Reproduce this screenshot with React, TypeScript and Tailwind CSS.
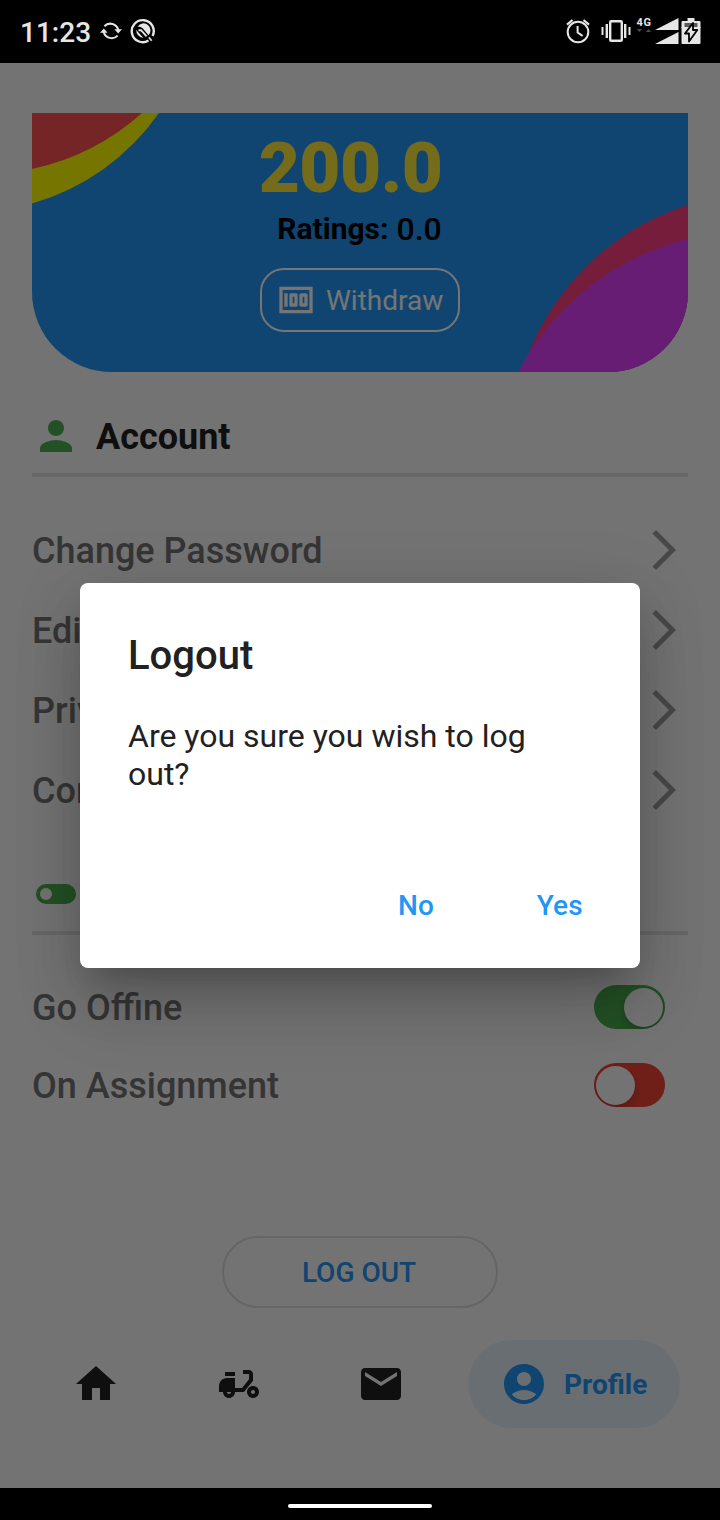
import React from "react";

type IconProps = { d: string; className: string };

function Glyph({ d, className }: IconProps) {
  return (
    <svg viewBox="0 0 24 24" fill="currentColor" fillRule="evenodd" className={className}>
      <path d={d} />
    </svg>
  );
}

const icons = {
  money:
    "M5 8h2v8H5zM12 8H9c-.55 0-1 .45-1 1v6c0 .55.45 1 1 1h3c.55 0 1-.45 1-1V9c0-.55-.45-1-1-1zm-1 6h-1v-4h1v4zM18 8h-3c-.55 0-1 .45-1 1v6c0 .55.45 1 1 1h3c.55 0 1-.45 1-1V9c0-.55-.45-1-1-1zm-1 6h-1v-4h1v4zM2 4v16h20V4H2zm2 14V6h16v12H4z",
  person:
    "M12 12c2.21 0 4-1.79 4-4s-1.79-4-4-4-4 1.79-4 4 1.79 4 4 4zm0 2c-2.67 0-8 1.34-8 4v2h16v-2c0-2.66-5.33-4-8-4z",
  toggle: "M7 7h10a5 5 0 0 1 0 10H7A5 5 0 0 1 7 7zM7 9a3 3 0 1 0 0 6a3 3 0 1 0 0-6z",
  chevron: "M6.23 20.23 8 22 18 12 8 2 6.23 3.77 14.46 12z",
  home: "M10 20v-6h4v6h5v-8h3L12 3 2 12h3v8z",
  scooter:
    "M19 7c0-1.1-.9-2-2-2h-3v2h3v2.65L13.52 14H10V9H6c-2.21 0-4 1.79-4 4v3h2c0 1.66 1.34 3 3 3s3-1.34 3-3h4.48L19 10.35V7zM7 17c-.55 0-1-.45-1-1h2c0 .55-.45 1-1 1zM5 6h5v2H5zM19 13c-1.66 0-3 1.34-3 3s1.34 3 3 3 3-1.34 3-3-1.34-3-3-3zm0 4c-.55 0-1-.45-1-1s.45-1 1-1 1 .45 1 1-.45 1-1 1z",
  mail: "M20 4H4c-1.1 0-1.99.9-1.99 2L2 18c0 1.1.9 2 2 2h16c1.1 0 2-.9 2-2V6c0-1.1-.9-2-2-2zm0 4-8 5-8-5V6l8 5 8-5v2z",
  account:
    "M12 2C6.48 2 2 6.48 2 12s4.48 10 10 10 10-4.48 10-10S17.52 2 12 2zm0 4c1.93 0 3.5 1.57 3.5 3.5S13.93 13 12 13s-3.5-1.57-3.5-3.5S10.07 6 12 6zm0 14c-2.03 0-4.43-.82-6.14-2.88C7.55 15.8 9.68 15 12 15s4.45.8 6.14 2.12C16.43 19.18 14.03 20 12 20z",
};

function StatusBar() {
  return (
    <header className="flex h-[63px] shrink-0 items-center bg-black pl-5 pr-[19px] text-[#e6e6e6]">
      <span className="w-[79px] pt-[2px] text-[28px] font-medium leading-none">11:23</span>
      <svg viewBox="0 0 24 18" className="-mt-[2px] h-[18px] w-6" fill="none" stroke="currentColor" strokeWidth="2">
        <path d="M5.4 4.2A8.2 8.2 0 0 1 19.3 8M18.6 13.6A8.2 8.2 0 0 1 4.7 10" />
        <path d="M15.4 7.200h7.600l-3.800 4.200zM1 10.800h7.600L4.800 6.600z" fill="currentColor" stroke="none" />
      </svg>
      <svg viewBox="0 0 26 26" className="-mt-[2px] ml-[7px] h-[26px] w-[26px]" fill="none" stroke="currentColor">
        <path d="M18.500 22.500A11 11 0 1 1 22.600 18" strokeWidth="2.400" />
        <path d="M7.700 8.500A7 7 0 1 1 18.500 17.300L12.600 10.200Q11 8.800 7.700 8.500Z" fill="currentColor" stroke="none" />
        <path d="M6.200 11.800Q6.200 18.500 13.500 20L7.500 13.500Z" fill="currentColor" stroke="none" />
        <path d="M8.500 12.200H11L16.600 18.400" strokeWidth="2" />
        <path d="M18.800 19.400L21.800 22.800" strokeWidth="1.600" />
      </svg>
      <div className="flex-1" />
      <svg viewBox="0 0 24 26" className="-mt-px h-[26px] w-6" fill="none" stroke="currentColor" strokeWidth="2">
        <circle cx="12" cy="14" r="10.300" />
        <path d="M11.600 8v6.500l5 3.300" />
        <path d="M1 6.600l5.500-4.600M23 6.600l-5.500-4.600" strokeWidth="2.200" />
      </svg>
      <svg viewBox="0 0 30 22" className="-mt-[2px] ml-[11px] h-[22px] w-[30px]" fill="none" stroke="currentColor">
        <rect x="9.200" y="1.200" width="11.600" height="19.600" rx="1" strokeWidth="2.400" />
        <path d="M5.800 4v14M24.200 4v14" strokeWidth="2.400" />
        <path d="M1.500 7v8M28.500 7v8" strokeWidth="2" />
      </svg>
      <div className="ml-1 flex w-[18px] flex-col items-center pb-[15px]">
        <span className="text-[11px] font-bold leading-[12px] tracking-[0.500px]">4G</span>
        <svg viewBox="0 0 16 3" className="h-[3px] w-4 fill-[#4d4d4d]">
          <path d="M1 0h5L3.500 3zM10 3h5L12.500 0z" />
        </svg>
      </div>
      <svg viewBox="0 0 24 26" className="-mt-px ml-[2px] h-[26px] w-6" fill="currentColor">
        <path d="M0 12L23.500 0v12zM0 26L23.500 14v12z" />
      </svg>
      <svg viewBox="0 0 20 26" className="-mt-px ml-[2px] h-[26px] w-5">
        <path d="M6.500 0h7v3H18.500a1 1 0 0 1 1 1v6H.500V4a1 1 0 0 1 1-1h5z" fill="#e6e6e6" />
        <path d="M3.500 5h13v5h-13z" fill="#5a5a5a" />
        <path d="M.500 9h19v16a1 1 0 0 1-1 1h-17a1 1 0 0 1-1-1z" fill="currentColor" />
        <path d="M12 5L4 15.500h4V23.500L16.300 12h-4.300z" fill="currentColor" stroke="#000" strokeWidth="1.800" strokeLinejoin="round" />
      </svg>
    </header>
  );
}

function BalanceCard() {
  return (
    <section className="relative flex h-[259px] shrink-0 flex-col items-center overflow-hidden rounded-b-[80px] bg-[#2196f3]">
      <svg viewBox="0 0 656 259" className="absolute inset-0 h-full w-full">
        <path d="M0 0H127A233 233 0 0 1 0 90.500Z" fill="#ffff00" />
        <path d="M0 0H110A240 240 0 0 1 0 56Z" fill="#ff5252" />
        <path d="M656 92A255 255 0 0 0 490 259H656Z" fill="#ff4081" />
        <path d="M656 126A262 262 0 0 0 486 259H656Z" fill="#e040fb" />
      </svg>
      <p className="relative mt-[19px] pr-[19px] text-[71px] font-black leading-[72px] tracking-[-0.500px] text-[#ffeb3b]">200.0</p>
      <p className="relative mt-[7px] flex h-[36px] items-center gap-[8px] pr-px text-black">
        <span className="text-[30px] font-bold leading-none">Ratings:</span>
        <span className="text-[32px] font-medium leading-none">0.0</span>
      </p>
      <button className="relative mt-[21px] flex h-16 w-[200px] items-center rounded-[24px] border-2 border-white pl-[14px] text-white">
        <Glyph d={icons.money} className="h-10 w-10" />
        <span className="ml-[10px] pt-[2px] text-[28px] leading-none">Withdraw</span>
      </button>
    </section>
  );
}

function Divider() {
  return <div className="h-1 shrink-0 bg-[#e0e0e0]" />;
}

function MenuRow({ label }: { label: string }) {
  return (
    <li className="flex h-20 items-center justify-between">
      <span className="pt-[2px] text-[36px] font-medium leading-none text-[#757575]">{label}</span>
      <Glyph d={icons.chevron} className="h-12 w-12 text-[#9e9e9e]" />
    </li>
  );
}

function SwitchRow({ label, on }: { label: string; on: boolean }) {
  return (
    <div className="flex h-[78px] items-center justify-between pr-[23px]">
      <span className="pt-[2px] text-[36px] font-medium leading-none text-[#757575]">{label}</span>
      <span
        className={
          on
            ? "flex h-[43.500px] w-[71.500px] items-center justify-end overflow-hidden rounded-full bg-[#4caf50] p-[2px]"
            : "flex h-[43.500px] w-[71.500px] items-center justify-start overflow-hidden rounded-full bg-[#f44336] p-[2px]"
        }
      >
        <span className="h-[39px] w-[39px] rounded-full bg-[#fafafa] shadow-[0_4px_8px_rgba(0,0,0,0.2)]" />
      </span>
    </div>
  );
}

function BottomNav() {
  return (
    <nav className="flex h-[88px] shrink-0 items-center text-[#212121]">
      <Glyph d={icons.home} className="ml-[72px] h-12 w-12" />
      <Glyph d={icons.scooter} className="ml-[94.500px] h-12 w-12" />
      <Glyph d={icons.mail} className="ml-[94.500px] h-12 w-12" />
      <div className="ml-[63px] flex h-[88px] w-[212px] items-center rounded-full bg-[#e4f0f9] pl-8 text-[#2196f3]">
        <Glyph d={icons.account} className="h-12 w-12" />
        <span className="ml-4 pt-[2px] text-[28px] font-bold leading-none">Profile</span>
      </div>
    </nav>
  );
}

function LogoutDialog() {
  return (
    <div className="absolute inset-x-0 bottom-8 top-[63px] flex items-start justify-center bg-black/54 pt-[519.500px]">
      <div
        role="dialog"
        className="flex h-[385.500px] w-[560px] flex-col rounded-[8px] bg-white px-12 text-[#212121] shadow-[0_22px_30px_-14px_rgba(0,0,0,0.2),0_40px_68px_2px_rgba(0,0,0,0.14),0_12px_70px_4px_rgba(0,0,0,0.1)]"
      >
        <h2 className="mt-[49px] text-[40px] font-medium leading-[48px]">Logout</h2>
        <p className="mt-[37px] w-[430px] text-[32px] leading-[38px]">Are you sure you wish to log out?</p>
        <div className="mt-[93px] flex text-[28px] font-medium leading-[40px] tracking-[0.200px] text-[#2196f3]">
          <button className="ml-[270px]">No</button>
          <button className="ml-[102.500px]">Yes</button>
        </div>
      </div>
    </div>
  );
}

export default function App() {
  return (
    <div className="relative flex h-[1520px] w-[720px] flex-col overflow-hidden bg-[#fafafa] font-[Roboto,sans-serif]">
      <StatusBar />
      <main className="flex h-[1277px] shrink-0 flex-col px-8 pt-[50px]">
        <BalanceCard />
        <div className="mt-10 flex h-12 shrink-0 items-center gap-4">
          <Glyph d={icons.person} className="h-12 w-12 text-[#4caf50]" />
          <h1 className="pt-[2px] text-[36px] font-bold leading-none text-[#212121]">Account</h1>
        </div>
        <div className="h-[13px] shrink-0" />
        <Divider />
        <ul className="mt-[33px] shrink-0">
          <MenuRow label="Change Password" />
          <MenuRow label="Edit" />
          <MenuRow label="Priv" />
          <MenuRow label="Con" />
        </ul>
        <div className="mt-10 flex h-12 shrink-0 items-center">
          <Glyph d={icons.toggle} className="h-12 w-12 text-[#4caf50]" />
        </div>
        <div className="h-[13px] shrink-0" />
        <Divider />
        <div className="mt-[33px] shrink-0">
          <SwitchRow label="Go Offine" on />
          <SwitchRow label="On Assignment" on={false} />
        </div>
        <button className="mt-[112px] h-[72px] w-[276px] shrink-0 self-center rounded-full border-2 border-[#dcdcdc] pr-[2px] pt-[2px] text-[28px] font-medium leading-none text-[#2196f3]">
          LOG OUT
        </button>
      </main>
      <BottomNav />
      <div className="flex-1" />
      <footer className="flex h-8 shrink-0 items-center justify-center bg-black pt-1">
        <div className="h-1 w-36 rounded-full bg-white" />
      </footer>
      <LogoutDialog />
    </div>
  );
}
